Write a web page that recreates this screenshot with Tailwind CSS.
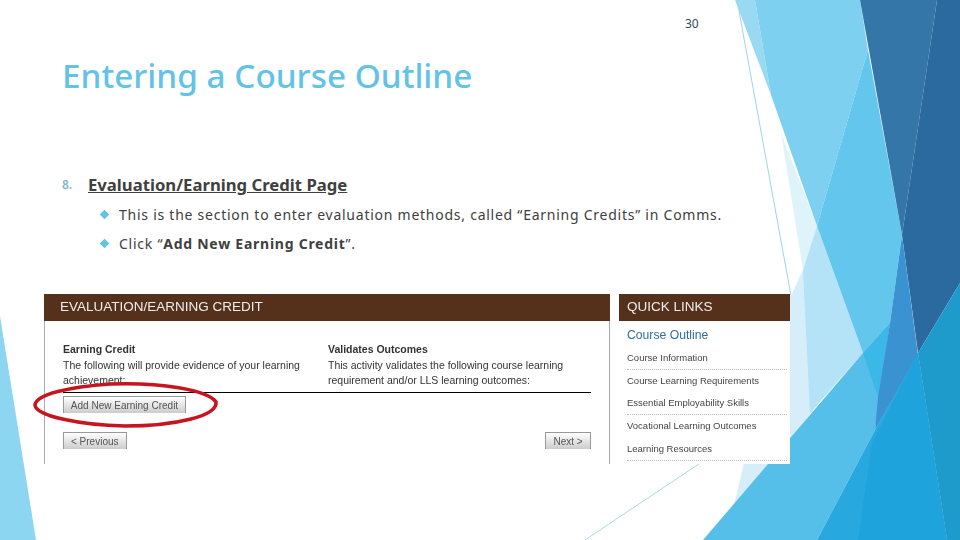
<!DOCTYPE html>
<html lang="en">
  <head>
    <meta charset="UTF-8" />
    <title>Entering a Course Outline</title>
    <script src="https://cdn.jsdelivr.net/npm/@tailwindcss/browser@4"></script>
  </head>

  <body class="bg-white">
    <div class="relative w-[960px] h-[540px] overflow-hidden bg-white font-['Noto_Sans',sans-serif]">
      <!-- Slide background shapes -->
      <svg class="absolute inset-0" width="960" height="540" viewBox="0 0 960 540">
        <polygon points="0,316 36,540 0,540" fill="#8dd6f1" />
        <line x1="737" y1="0" x2="832" y2="520" stroke="#9fd4e6" stroke-width="1" />
        <line x1="585" y1="540" x2="862" y2="355" stroke="#a9d8e8" stroke-width="1" />
        <polygon points="781,133 817,226 803,270" fill="#dff3fb" />
        <polygon points="803,270 775,330 733,510 827,393" fill="#d5eefa" />
        <polygon points="817,226 863,353 810,413 803,270" fill="#b4e2f6" />
        <polygon points="735,0 755,0 771,95" fill="#9ad9f2" />
        <polygon points="755,0 860,0 868,50 817,226 771,95" fill="#7dd0f0" />
        <polygon points="868,50 902,235 890,323 863,353 817,226" fill="#63c7ed" />
        <polygon points="860,0 937,0 902,235" fill="#3576a8" />
        <polygon points="937,0 960,0 960,283 918,353 902,235" fill="#2a6a9f" />
        <polygon points="703,540 863,353 890,323 875,430 817,540" fill="#55bfe9" />
        <polygon points="863,353 890,323 878,397" fill="#3ab8e8" />
        <polygon points="902,235 918,355 875,430 878,397 890,323" fill="#3a93d0" />
        <polygon points="918,353 947,540 817,540 875,430" fill="#27a8df" />
        <polygon points="918,353 947,540 858,540 872,443" fill="#1fa3dc" />
        <polygon points="918,353 960,283 960,540 947,540" fill="#1e9acb" />
      </svg>

      <div class="relative flex flex-col h-full">
        <div class="pt-[16px] pl-[685px] text-[12px] leading-[16px] text-[#2f4858]">30</div>

        <h1 class="mt-[21px] ml-[62px] text-[33.3px] leading-[44px] text-[#63c3e6] font-medium">Entering a Course Outline</h1>

        <div class="mt-[77px] ml-[62px] flex items-center">
          <span class="w-[26px] text-[12px] font-semibold text-[#7fb6cc]">8.</span>
          <span class="text-[16.7px] leading-[22px] font-bold underline text-[#404040]">Evaluation/Earning Credit Page</span>
        </div>

        <ul class="mt-[8px] ml-[100px] flex flex-col gap-[8px] text-[14px] leading-[21px] text-[#404040] tracking-[0.75px]">
          <li class="flex items-center gap-[10px]">
            <span class="w-[9px] h-[9px] rotate-45 bg-[#63c3e6] scale-75"></span>
            <span>This is the section to enter evaluation methods, called “Earning Credits” in Comms.</span>
          </li>
          <li class="flex items-center gap-[10px]">
            <span class="w-[9px] h-[9px] rotate-45 bg-[#63c3e6] scale-75"></span>
            <span>Click “<b>Add New Earning Credit</b>”.</span>
          </li>
        </ul>

        <!-- Pasted screenshot of the Comms page -->
        <div class="mt-[40px] ml-[44px] w-[746px] h-[170px] bg-white flex font-['Liberation_Sans',sans-serif] text-[10.5px] text-[#333] blur-[0.4px]">
          <section class="w-[566px] border-x border-[#aaa] flex flex-col">
            <h2 class="bg-[#55301a] -mx-px h-[27px] pl-[16px] flex items-center text-[13.5px] text-[#eee]">EVALUATION/EARNING CREDIT</h2>
            <div class="mt-[21px] mx-[18px] grid grid-cols-[265px_1fr] leading-[15.5px] border-b border-black h-[51px]">
              <div>
                <b>Earning Credit</b>
                <p>The following will provide evidence of your learning achievement:</p>
              </div>
              <div>
                <b>Validates Outcomes</b>
                <p>This activity validates the following course learning requirement and/or LLS learning outcomes:</p>
              </div>
            </div>
            <button class="mt-[3px] ml-[18px] w-[123px] h-[17px] bg-gradient-to-b from-white to-[#ccc] border-t border-x border-[#999] text-[#555] text-[10px]">Add New Earning Credit</button>
            <div class="mt-[19px] mx-[18px] flex justify-between text-[#555] text-[10px]">
              <button class="w-[64px] h-[17px] bg-gradient-to-b from-white to-[#ccc] border-t border-x border-[#999] text-left pl-[7px]">&lt; Previous</button>
              <button class="w-[46px] h-[17px] bg-gradient-to-b from-white to-[#ccc] border-t border-x border-[#999]">Next &gt;</button>
            </div>
          </section>

          <aside class="ml-[9px] w-[171px] bg-white">
            <h2 class="bg-[#55301a] h-[27px] pl-[8px] flex items-center text-[13.5px] text-[#eee]">QUICK LINKS</h2>
            <p class="pl-[8px] mt-[6px] text-[12.2px] leading-[16px] text-[#2f6f9a]">Course Outline</p>
            <ul class="mt-[4px] ml-[8px] mr-[3px] text-[9.5px] text-[#444] leading-[21.7px] [&>li]:border-b [&>li]:border-dotted [&>li]:border-transparent [&>li:nth-child(odd)]:border-[#bbb]">
              <li>Course Information</li>
              <li>Course Learning Requirements</li>
              <li>Essential Employability Skills</li>
              <li>Vocational Learning Outcomes</li>
              <li>Learning Resources</li>
            </ul>
          </aside>
        </div>
      </div>

      <!-- Red hand drawn circle round the button -->
      <svg class="absolute left-0 top-0 pointer-events-none" width="960" height="540" viewBox="0 0 960 540">
        <path d="M110 384 C160 382 208 390 216 402 C218 416 175 426 125 426 C80 425 36 416 35 405 C36 394 70 387 110 384 Z" fill="none" stroke="#c8141f" stroke-width="3.5" />
      </svg>
    </div>
  </body>
</html>
